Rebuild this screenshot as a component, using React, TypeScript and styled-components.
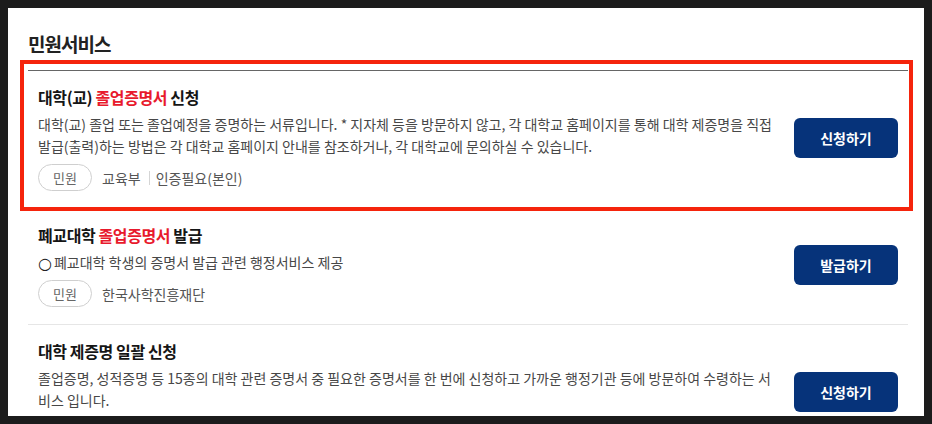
import styled, { createGlobalStyle } from 'styled-components';

const GlobalStyle = createGlobalStyle`
  html, body {
    margin: 0;
    padding: 0;
    background: #1c1c1c;
  }
  body {
    font-family: 'Noto Sans CJK KR', 'Noto Sans', sans-serif;
  }
  * {
    box-sizing: border-box;
  }
`;

const Frame = styled.div`
  height: 100vh;
  padding: 8px;
`;

const Panel = styled.section`
  height: 100%;
  background: #ffffff;
  overflow: hidden;
  padding: 22px 16px 0 20px;
`;

const Heading = styled.h2`
  margin: 0 0 12px;
  font-size: 19px;
  line-height: 28px;
  font-weight: 700;
  color: #222;
  letter-spacing: -1px;
`;

const List = styled.ul`
  list-style: none;
  margin: 0;
  padding: 0;
  border-top: 1px solid #666;
`;

const Item = styled.li`
  position: relative;
  display: flex;
  align-items: center;
  gap: 16px;
  padding: 14px 10px 17px;
  border-bottom: 1px solid #e6e6e6;
`;

const Highlight = styled.div`
  position: absolute;
  top: -11px;
  left: -8px;
  right: -5px;
  bottom: -3px;
  border: 4px solid #f5240c;
  pointer-events: none;
`;

const Content = styled.div`
  flex: 1;
  min-width: 0;
`;

const Title = styled.h3`
  margin: 0;
  font-size: 16px;
  line-height: 24px;
  font-weight: 700;
  color: #151515;
  letter-spacing: -0.4px;
`;

const Accent = styled.span`
  color: #e8192c;
`;

const Desc = styled.p`
  margin: 4px 0 0;
  font-size: 14px;
  line-height: 22px;
  color: #474747;
`;

const Bullet = styled.span`
  font-family: 'DejaVu Sans', sans-serif;
  font-size: 16px;
  line-height: 1;
  vertical-align: -1px;
  color: #222;
  margin-right: 2px;
`;

const Meta = styled.div`
  display: flex;
  align-items: center;
  margin-top: 7px;
  font-size: 14px;
  color: #555;
`;

const Pill = styled.span`
  display: inline-flex;
  align-items: center;
  justify-content: center;
  width: 54px;
  height: 27px;
  margin-right: 10px;
  border: 1px solid #cfcfcf;
  border-radius: 14px;
  font-size: 13px;
  color: #666;
`;

const MetaText = styled.span<{ $divided?: boolean }>`
  line-height: 20px;
  ${({ $divided }) =>
    $divided &&
    `
    margin-left: 8px;
    padding-left: 6px;
    border-left: 1px solid #d5d5d5;
    line-height: 14px;
  `}
`;

const ActionButton = styled.button`
  flex: none;
  width: 104px;
  height: 40px;
  border: 0;
  border-radius: 6px;
  background: #06337a;
  color: #fff;
  font-family: inherit;
  font-size: 14px;
  font-weight: 700;
  cursor: pointer;
`;

interface Service {
  pre: string;
  accent?: string;
  post?: string;
  desc: string;
  bullet?: boolean;
  orgs: string[];
  action: string;
  highlighted?: boolean;
}

const services: Service[] = [
  {
    pre: '대학(교) ',
    accent: '졸업증명서',
    post: ' 신청',
    desc: '대학(교) 졸업 또는 졸업예정을 증명하는 서류입니다. * 지자체 등을 방문하지 않고, 각 대학교 홈페이지를 통해 대학 제증명을 직접 발급(출력)하는 방법은 각 대학교 홈페이지 안내를 참조하거나, 각 대학교에 문의하실 수 있습니다.',
    orgs: ['교육부', '인증필요(본인)'],
    action: '신청하기',
    highlighted: true,
  },
  {
    pre: '폐교대학 ',
    accent: '졸업증명서',
    post: ' 발급',
    bullet: true,
    desc: '폐교대학 학생의 증명서 발급 관련 행정서비스 제공',
    orgs: ['한국사학진흥재단'],
    action: '발급하기',
  },
  {
    pre: '대학 제증명 일괄 신청',
    desc: '졸업증명, 성적증명 등 15종의 대학 관련 증명서 중 필요한 증명서를 한 번에 신청하고 가까운 행정기관 등에 방문하여 수령하는 서비스 입니다.',
    orgs: ['교육부'],
    action: '신청하기',
  },
];

export default function App() {
  return (
    <>
      <GlobalStyle />
      <Frame>
        <Panel>
          <Heading>민원서비스</Heading>
          <List>
            {services.map((s, i) => (
              <Item key={i}>
                {s.highlighted && <Highlight />}
                <Content>
                  <Title>
                    {s.pre}
                    {s.accent && <Accent>{s.accent}</Accent>}
                    {s.post}
                  </Title>
                  <Desc>
                    {s.bullet && <Bullet>○</Bullet>}
                    {s.desc}
                  </Desc>
                  <Meta>
                    <Pill>민원</Pill>
                    {s.orgs.map((o, j) => (
                      <MetaText key={o} $divided={j > 0}>
                        {o}
                      </MetaText>
                    ))}
                  </Meta>
                </Content>
                <ActionButton>{s.action}</ActionButton>
              </Item>
            ))}
          </List>
        </Panel>
      </Frame>
    </>
  );
}
